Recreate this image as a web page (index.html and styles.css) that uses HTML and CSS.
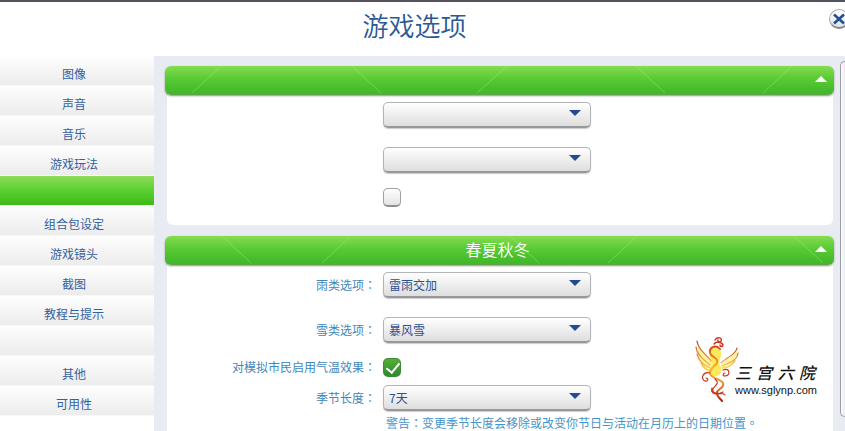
FILE: index.html
```html
<!DOCTYPE html>
<html lang="zh-TW">
<head>
    <meta charset="UTF-8">
    <meta name="viewport" content="width=device-width, initial-scale=1.0">
    <title>游戏选项</title>
    <link rel="stylesheet" href="styles.css">
</head>
<body>
    <header class="header">
        <h1>游戏选项</h1>
        <button type="button" class="close-button" aria-label="关闭">
            <svg viewBox="0 0 12 12" width="12" height="12"><path d="M1 1.5 11 10.5M11 1.5 1 10.5" stroke="#24508f" stroke-width="2.6"/></svg>
        </button>
    </header>

    <div class="layout">
        <nav class="menu">
            <a href="#">图像</a>
            <a href="#">声音</a>
            <a href="#">音乐</a>
            <a href="#">游戏玩法</a>
            <a href="#" class="active" aria-label="当前"></a>
            <a href="#">组合包设定</a>
            <a href="#">游戏镜头</a>
            <a href="#">截图</a>
            <a href="#">教程与提示</a>
            <a href="#" aria-label="空"></a>
            <a href="#">其他</a>
            <a href="#">可用性</a>
        </nav>

        <main class="content">
            <section class="panel">
                <button type="button" class="panel-header" aria-label="折叠">
                    <svg class="streaks" viewBox="0 0 669 30" preserveAspectRatio="none"><path d="M27 30 56 0M187 0 216 30M312 30 342 0M471 0 500 30M598 30 627 0"/></svg>
                </button>
                <div class="panel-body">
                    <div class="row">
                        <label for="option1"></label>
                        <div class="dropdown"><select id="option1" aria-label="选项一"><option></option></select></div>
                    </div>
                    <div class="row">
                        <label for="option2"></label>
                        <div class="dropdown"><select id="option2" aria-label="选项二"><option></option></select></div>
                    </div>
                    <div class="row toggle">
                        <label for="option3"></label>
                        <input type="checkbox" id="option3" aria-label="选项三">
                    </div>
                </div>
            </section>

            <section class="panel">
                <button type="button" class="panel-header">
                    <svg class="streaks" viewBox="0 0 669 30" preserveAspectRatio="none"><path d="M57 0 86 30M157 30 186 0M345 0 374 30M443 30 472 0M629 0 658 30"/></svg>
                    春夏秋冬
                </button>
                <div class="panel-body">
                    <div class="row">
                        <label for="rain">雨类选项：</label>
                        <div class="dropdown"><select id="rain"><option>雷雨交加</option></select></div>
                    </div>
                    <div class="row">
                        <label for="snow">雪类选项：</label>
                        <div class="dropdown"><select id="snow"><option>暴风雪</option></select></div>
                    </div>
                    <div class="row toggle">
                        <label for="temperature">对模拟市民启用气温效果：</label>
                        <input type="checkbox" id="temperature" checked>
                    </div>
                    <div class="row compact">
                        <label for="season">季节长度：</label>
                        <div class="dropdown"><select id="season"><option>7天</option></select></div>
                    </div>
                    <p class="warning">警告：变更季节长度会移除或改变你节日与活动在月历上的日期位置。</p>
                </div>
            </section>
        </main>
        <div class="scrollbar"></div>
    </div>

    <!-- Site badge over the panel -->
    <div class="badge">
        <svg class="phoenix" viewBox="0 0 45 66" width="45" height="66" fill="none" stroke-linecap="round">
            <defs>
                <linearGradient id="flame" x1="0" y1="0" x2="0" y2="1">
                    <stop offset="0" stop-color="#d8431d"/>
                    <stop offset=".4" stop-color="#f6b62c"/>
                    <stop offset=".7" stop-color="#ec8a24"/>
                    <stop offset="1" stop-color="#a81c14"/>
                </linearGradient>
                <linearGradient id="wing" x1="0" y1="0" x2="0" y2="1">
                    <stop offset="0" stop-color="#b8402a"/>
                    <stop offset=".6" stop-color="#f09a3a"/>
                    <stop offset="1" stop-color="#f8cf4a"/>
                </linearGradient>
            </defs>
            <path d="M15 17C14 10 25 9 26 17C27 22 22 25 26 31C28 37 23 42 16 40C14 32 16 25 15 17Z" fill="#fdea5c"/>
            <path d="M3 9C6 17 14 19 17 26L15 38C6 32 2 22 3 9ZM42 13C41 20 31 23 26 29L28 33C38 32 43 23 42 13Z" fill="#fdf3a0"/>
            <path d="M2 5C3 15 12 18 16 25M1 11C2 20 10 24 15 29M2 18C4 26 10 30 15 32M6 27C8 32 12 34 16 35" stroke="url(#wing)" stroke-width="1.2"/>
            <path d="M42 12C41 19 32 21 26 27M43 17C42 25 34 27 27 30M40 25C36 31 31 32 27 32" stroke="url(#wing)" stroke-width="1.2"/>
            <path d="M20 4C22 0 28 2 26 5C24 7 22 5 23 4M19 8C21 5 27 6 28 9C28 11 25 11 25 9" stroke="#cf2c1b" stroke-width="1.4"/>
            <path d="M25 13C21 8 14 11 15 17C16 22 24 21 22 27C20 31 14 32 15 38C17 43 25 42 28 47C30 53 20 53 22 58C23 62 26 63 27 65" stroke="url(#flame)" stroke-width="2"/>
            <path d="M28 34C35 31 36 40 30 40C27 40 28 37 30 37M15 37C8 35 5 43 10 45C13 46 14 42 11 42M20 43C27 49 16 50 18 55C20 60 27 55 30 59M17 52C15 58 22 60 28 56" stroke="#c4361c" stroke-width="1.2"/>
        </svg>
        <div class="badge-text">
            <div class="badge-name"><span>三</span><span>宫</span><span>六</span><span>院</span></div>
            <div class="badge-url">www.sglynp.com</div>
        </div>
    </div>
</body>
</html>
```
FILE: styles.css
```css
* {
    box-sizing: border-box;
}
body {
    font-family: "Noto Sans CJK TC", "Noto Sans CJK SC", sans-serif;
    margin: 0;
    height: 100vh;
    display: flex;
    flex-direction: column;
    position: relative;
    overflow: hidden;
    background-color: white;
    color: #2b5a9b;
    font-size: 12px;
}
button,
select {
    font-family: inherit;
    color: inherit;
}
.header {
    position: relative;
    flex: none;
    height: 56px;
    padding: 5px 16px 0 0;
    border-top: 2px solid #55525c;
    text-align: center;
}
h1 {
    margin: 0;
    font-size: 26px;
    line-height: 36px;
    font-weight: 350;
    color: #2a5995;
}
.close-button {
    position: absolute;
    top: 7px;
    right: -4px;
    width: 20px;
    height: 20px;
    padding: 0;
    display: flex;
    align-items: center;
    justify-content: center;
    border: 1px solid #a9acb5;
    border-bottom: 2px solid #85878c;
    border-radius: 50%;
    background: linear-gradient(#ffffff, #dfe2e8);
}
.layout {
    flex: 1;
    min-height: 0;
    display: flex;
    background-color: #e8ebf2;
}
.menu {
    flex: none;
    width: 154px;
    background-color: white;
}
.menu a {
    display: block;
    height: 30px;
    padding: 4px 6px 0 0;
    line-height: 28px;
    text-align: center;
    text-decoration: none;
    color: #3361a0;
    background: linear-gradient(#fefefe, #ececed);
    border-bottom: 1px solid #f8f8f8;
}
.menu a.active {
    background: linear-gradient(#8fdc58, #5bcf32 50%, #3dbb17);
}
.content {
    flex: 1;
    padding: 10px 7px 0 13px;
}
.panel {
    margin-bottom: 11px;
    border-radius: 6px;
    background-color: white;
}
.panel-header {
    position: relative;
    display: block;
    width: calc(100% + 3px);
    height: 29px;
    margin: 0 -2px;
    padding: 0 4px 0 0;
    border: 0;
    border-bottom: 2px solid #5fa548;
    border-radius: 6px;
    background: linear-gradient(#86dc50, #5bcb35 45%, #3fb829);
    box-shadow: 0 1px 2px #8a9686;
    color: white;
    font-size: 16px;
    font-weight: 350;
    line-height: 27px;
}
.panel-header::after {
    content: "";
    position: absolute;
    top: 10px;
    right: 7px;
    border: 6px solid transparent;
    border-top: 0;
    border-bottom-color: white;
}
.streaks {
    position: absolute;
    top: 0;
    left: 0;
    width: 100%;
    height: 100%;
    stroke: #a6e580;
    stroke-opacity: 0.5;
}
.panel-body {
    padding: 5px 0 13px;
}
.row {
    display: grid;
    grid-template-columns: 209px 1fr;
    gap: 7px;
    align-items: center;
    height: 30px;
}
.row + .row {
    margin-top: 15px;
}
.row + .toggle {
    margin-top: 7px;
}
.row + .compact {
    margin-top: 1px;
}
label {
    padding-bottom: 1px;
    text-align: right;
    white-space: nowrap;
    color: #3f87ba;
}
.dropdown {
    position: relative;
    width: 208px;
}
.dropdown::after {
    content: "";
    position: absolute;
    top: 8px;
    right: 10px;
    border: 6px solid transparent;
    border-bottom: 0;
    border-top-color: #214b92;
    pointer-events: none;
}
select {
    appearance: none;
    display: block;
    width: 100%;
    height: 26px;
    padding: 0 24px 0 5px;
    border: 1px solid #b4b4b8;
    border-bottom: 2px solid #98989b;
    border-radius: 5px;
    background: linear-gradient(#ffffff, #dededf);
    box-shadow: 0 1px 1px #cccccc;
    font-size: 12px;
    color: #2c5191;
}
input[type="checkbox"] {
    appearance: none;
    width: 18px;
    height: 19px;
    margin: 0;
    border: 1px solid #a2a2a6;
    border-bottom: 2px solid #8f8f92;
    border-radius: 5px;
    background: linear-gradient(#ffffff, #e4e4e6);
}
input[type="checkbox"]:checked {
    position: relative;
    border-color: #3b8a34;
    background: linear-gradient(#58ad36, #2f8a32);
}
input[type="checkbox"]:checked::after {
    content: "";
    position: absolute;
    top: 1px;
    left: 5px;
    width: 6px;
    height: 11px;
    border: solid white;
    border-width: 0 2px 2px 0;
    transform: rotate(40deg);
}
.warning {
    margin: 1px 0 0 219px;
    line-height: 18px;
    white-space: nowrap;
    color: #4595cc;
}
.scrollbar {
    flex: none;
    width: 5px;
    margin: 5px 0 14px;
    border: 1px solid #9a9ca8;
    border-right: 0;
    border-radius: 5px 0 0 5px;
    background: linear-gradient(90deg, #ffffff, #e9eaee);
}
.badge {
    position: absolute;
    right: 30px;
    bottom: 29px;
    display: flex;
    color: #111111;
}
.phoenix {
    margin-right: -5px;
}
.badge-text {
    width: 80px;
    padding-top: 24px;
}
.badge-name {
    display: flex;
    justify-content: space-between;
    font-size: 16px;
    line-height: 24px;
    font-style: italic;
    font-weight: 500;
}
.badge-url {
    font-family: "Liberation Sans", sans-serif;
    font-size: 11px;
    line-height: 12px;
}
```
